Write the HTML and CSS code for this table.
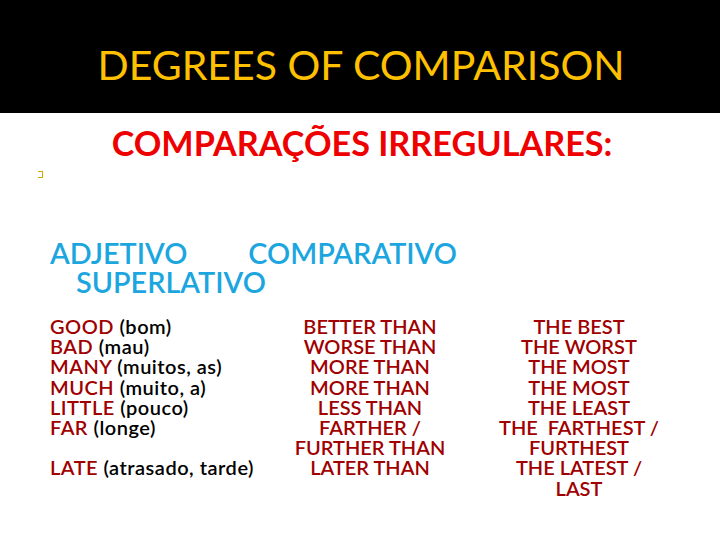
FILE: index.html
```html
<!DOCTYPE html>
<html lang="pt">
<head>
	<meta charset="utf-8"/>
	<title>Degrees of Comparison</title>
	<link rel="stylesheet" href="styles.css">
</head>
<body>

<!--标题栏-->
<div class="slide-head">
	<h1 class="slide-head__title">DEGREES OF COMPARISON</h1>
</div>

<div class="slide-body">
	<h2 class="slide-body__sub">COMPARAÇÕES IRREGULARES:</h2>
	<div class="slide-body__bullet"><span class="bullet-box"></span></div>

	<div class="heads">
		<p class="heads__line">ADJETIVO<span class="heads__gap"></span>COMPARATIVO</p>
		<p class="heads__line heads__line_indent">SUPERLATIVO</p>
	</div>

	<div class="cols">
		<div class="cols__item cols__item_left">
			<p><b>GOOD</b> (bom)</p>
			<p><b>BAD</b> (mau)</p>
			<p><b>MANY</b> (muitos, as)</p>
			<p><b>MUCH</b> (muito, a)</p>
			<p><b>LITTLE</b> (pouco)</p>
			<p><b>FAR</b> (longe)</p>
			<p>&nbsp;</p>
			<p><b>LATE</b> (atrasado, tarde)</p>
		</div>
		<div class="cols__item cols__item_mid">
			<p>BETTER THAN</p>
			<p>WORSE THAN</p>
			<p>MORE THAN</p>
			<p>MORE THAN</p>
			<p>LESS THAN</p>
			<p>FARTHER /</p>
			<p>FURTHER THAN</p>
			<p>LATER THAN</p>
		</div>
		<div class="cols__item cols__item_right">
			<p>THE BEST</p>
			<p>THE WORST</p>
			<p>THE MOST</p>
			<p>THE MOST</p>
			<p>THE LEAST</p>
			<p>THE&nbsp; FARTHEST /</p>
			<p>FURTHEST</p>
			<p>THE LATEST /</p>
			<p>LAST</p>
		</div>
	</div>
</div>

</body>
</html>
```

FILE: styles.css
```css
/*页面基础*/
html,body{
	margin: 0;
	padding: 0;
	background: #fff;
	font-family: Lato, "Open Sans", sans-serif;
}
p,h1,h2{
	margin: 0;
}
h1{
	font-weight: 400;
}

/*黑色标题栏*/
.slide-head{
	height: 113px;
	box-sizing: border-box;
	padding-top: 15px;
	background: #000;
	display: flex;
	align-items: center;
	justify-content: center;
}
.slide-head__title{
	color: #ffc000;
	font-size: 41px;
	line-height: 1;
	padding-left: 2px;
}

/*副标题*/
.slide-body__sub{
	margin-top: 10px;
	text-align: center;
	color: #ee0000;
	font-size: 34.2px;
	font-weight: 700;
	line-height: 40px;
	padding-left: 4px;
}
.slide-body__bullet{
	margin-top: 8px;
	padding-left: 38px;
	height: 7px;
}
.bullet-box{
	display: block;
	width: 4px;
	height: 5px;
	border: 1px solid #d0a800;
	border-left: none;
}

/*蓝色列标题*/
.heads{
	margin-top: 61px;
	padding-left: 50px;
	color: #1ca6e0;
	font-size: 28.8px;
	font-weight: 600;
	line-height: 29px;
}
.heads__gap{
	display: inline-block;
	width: 61px;
}
.heads__line_indent{
	padding-left: 26px;
}

/*三列内容*/
.cols{
	margin-top: 19px;
	padding-left: 50px;
	display: grid;
	grid-template-columns: 220px 200px 218px;
	font-size: 20px;
	font-weight: 600;
	line-height: 20.2px;
	color: #a00000;
}
.cols__item_left{
	color: #000;
	letter-spacing: 0.5px;
}
.cols__item_left b{
	font-weight: 600;
	color: #a00000;
}
.cols__item_mid,
.cols__item_right{
	text-align: center;
}
```
